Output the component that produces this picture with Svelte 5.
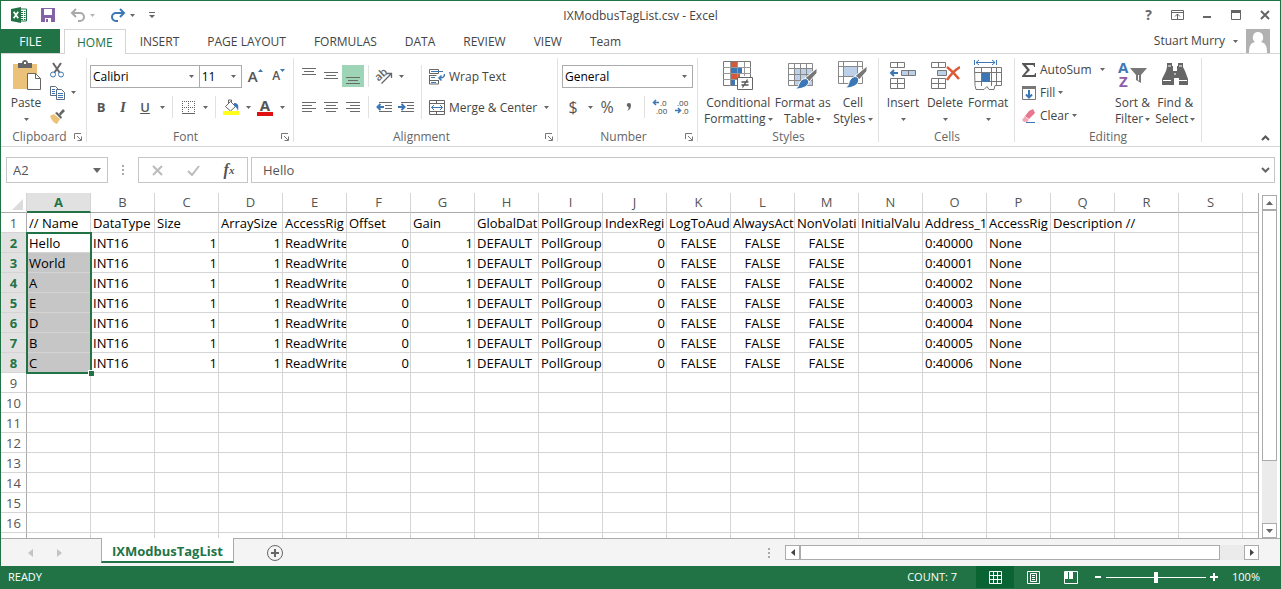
<script>
  const tabs = ['HOME', 'INSERT', 'PAGE LAYOUT', 'FORMULAS', 'DATA', 'REVIEW', 'VIEW', 'Team'];
  const columns = 'ABCDEFGHIJKLMNOPQRST'.split('');
  const rowNumbers = Array.from({ length: 17 }, (_, i) => i + 1);

  const headings = [
    '// Name', 'DataType', 'Size', 'ArraySize', 'AccessRig', 'Offset', 'Gain', 'GlobalDat',
    'PollGroup', 'IndexRegi', 'LogToAud', 'AlwaysAct', 'NonVolati', 'InitialValu',
    'Address_1', 'AccessRig', 'Description //'
  ];
  const names = ['Hello', 'World', 'A', 'E', 'D', 'B', 'C'];
  const tags = names.map((name, i) => [
    name, 'INT16', 1, 1, 'ReadWrite', 0, 1, 'DEFAULT', 'PollGroup', 0,
    'FALSE', 'FALSE', 'FALSE', '', '0:' + (40000 + i), 'None'
  ]);

  let activeTab = $state('HOME');
  let nameBox = $state('A2');
  let formula = $state('Hello');
  let zoom = $state(100);

  function cells(row) {
    // the last heading spills over its empty neighbour
    if (row === 1) return [...headings, '', ''];
    const tag = tags[row - 2] ?? [];
    return columns.map((_, i) => tag[i] ?? '');
  }

  function kind(value) {
    if (typeof value === 'number') return 'num';
    return value === 'FALSE' ? 'bool' : '';
  }

  const selected = (row) => row >= 2 && row <= 8;
</script>

{#snippet caret()}
  <svg class="caret" width="5" height="3" viewBox="0 0 5 3"><path d="M0 0h5L2.500 3z" fill="currentColor" /></svg>
{/snippet}

{#snippet lines(list)}
  <svg width="16" height="16" viewBox="0 0 16 16" stroke="#6a6a6a" shape-rendering="crispEdges">
    {#each list as [x, y, w]}<path d="M{x} {y + 0.5}h{w}" />{/each}
  </svg>
{/snippet}

{#snippet footer(label, launcher = true)}
  <div class="footer">
    <span>{label}</span>
    {#if launcher}
      <button class="launcher" aria-label="{label} settings">
        <svg width="8" height="8" viewBox="0 0 8 8" fill="none" stroke="#777"><path d="M.5 6V.5H7M3 3l4 4M7.500 3.500v4h-4" /></svg>
      </button>
    {/if}
  </div>
{/snippet}

<div class="window">
  <header class="titlebar">
    <div class="quick">
      <svg width="16" height="16" viewBox="0 0 16 16">
        <path d="M9 2h6.500v12H9z" fill="#fff" stroke="#217346" />
        <path d="M10 4.500h2M13 4.500h1.500M10 6.500h2M13 6.500h1.500M10 8.500h2M13 8.500h1.500M10 10.500h2M13 10.500h1.500M10 12.500h2M13 12.500h1.500" stroke="#217346" />
        <path d="M0 2l10-2v16L0 14z" fill="#217346" />
        <path d="M2.700 4.700l4.500 6.600M7.200 4.700l-4.500 6.600" stroke="#fff" stroke-width="1.700" />
      </svg>
      <button class="save" aria-label="Save">
        <svg width="14" height="14" viewBox="0 0 14 14"><path d="M0 0h14v14H0z" fill="#8561a5" /><path d="M3 1h8v6H3zM4 10h6v4H4z" fill="#fff" /><path d="M5 11h2v3H5z" fill="#8561a5" /></svg>
      </button>
      <button class="undo" aria-label="Undo">
        <svg width="16" height="14" viewBox="0 0 16 14" fill="none" stroke="#a9a9a9" stroke-width="2"><path d="M6 1L2 5l4 4M2.500 5H10a4 4 0 0 1 0 8H8" /></svg>
        {@render caret()}
      </button>
      <button class="redo" aria-label="Redo">
        <svg width="16" height="14" viewBox="0 0 16 14" fill="none" stroke="#3b76b5" stroke-width="2"><path d="M10 1l4 4-4 4M13.500 5H6a4 4 0 0 0 0 8h2" /></svg>
        {@render caret()}
      </button>
      <button class="customise" aria-label="Customize Quick Access Toolbar">
        <svg width="6" height="7" viewBox="0 0 6 7"><path d="M0 0h6v1H0zM0 3h6L3 6z" fill="#666" /></svg>
      </button>
    </div>
    <h1>IXModbusTagList.csv - Excel</h1>
    <div class="controls">
      <button aria-label="Help"><b>?</b></button>
      <button aria-label="Ribbon Display Options">
        <svg width="13" height="10" viewBox="0 0 13 10" fill="none" stroke="#666"><path d="M.5.500h12v9H.5zM.5 2.500h12M6.500 9V4M4 6.500L6.500 4 9 6.500" /></svg>
      </button>
      <button aria-label="Minimize"><svg width="10" height="10" viewBox="0 0 10 10"><path d="M1 6h8v2H1z" fill="#666" /></svg></button>
      <button aria-label="Restore"><svg width="10" height="10" viewBox="0 0 10 10"><path d="M.5 2h9v7.500h-9z" fill="none" stroke="#666" /><path d="M0 0h10v3H0z" fill="#666" /></svg></button>
      <button aria-label="Close"><svg width="10" height="10" viewBox="0 0 10 10"><path d="M1 1l8 8M9 1L1 9" stroke="#666" stroke-width="2" /></svg></button>
    </div>
  </header>

  <nav class="tabs">
    <button class="file">FILE</button>
    {#each tabs as tab}
      <button class="tab" class:active={tab === activeTab} onclick={() => (activeTab = tab)}>{tab}</button>
    {/each}
    <button class="account">
      Stuart Murry {@render caret()}
      <svg width="24" height="24" viewBox="0 0 24 24"><path d="M0 0h24v24H0z" fill="#b1b1b1" /><path d="M12 3a5 5.500 0 0 1 3 10c4 1 6 3 6 11H3c0-8 2-10 6-11a5 5.500 0 0 1 3-10z" fill="#fff" /></svg>
    </button>
  </nav>

  <section class="ribbon">
    <div class="group clipboard">
      <div class="body">
        <button class="big">
          <svg width="30" height="32" viewBox="0 0 30 32">
            <path d="M2 6h24v25H2z" fill="#ecc27a" />
            <path d="M7 5h4c0-4 6-4 6 0h4v5H7z" fill="#666" /><path d="M13 4h2v2h-2z" fill="#fff" />
            <path d="M16.500 15.500h8l5 5v11h-13z" fill="#fff" stroke="#666" /><path d="M24.500 15.500v5h5" fill="none" stroke="#666" />
          </svg>
          <span>Paste</span><span class="drop">{@render caret()}</span>
        </button>
        <div class="stack">
          <button class="small" aria-label="Cut">
            <svg width="16" height="16" viewBox="0 0 16 16" fill="none"><path d="M4 1l6.500 9.500M12 1L5.500 10.500" stroke="#666" stroke-width="2" /><circle cx="4" cy="12.500" r="2.500" stroke="#3b76b5" /><circle cx="12" cy="12.500" r="2.500" stroke="#3b76b5" /></svg>
          </button>
          <button class="small" aria-label="Copy">
            <svg width="16" height="16" viewBox="0 0 16 16" fill="#fff" stroke="#5d6b7b"><path d="M1.500 1.500h5l3 3v6h-8z" /><path d="M3 4.500h3M3 6.500h3M3 8.500h3" stroke="#3b76b5" /><path d="M7.500 4.500h5l3 3v7h-8z" /><path d="M9 8.500h5M9 10.500h5M9 12.500h5" stroke="#3b76b5" /></svg>
            <i>{@render caret()}</i>
          </button>
          <button class="small" aria-label="Format Painter">
            <svg width="16" height="16" viewBox="0 0 16 16"><path d="M1 8l4-2 6 5-3 5c-3-1-6-4-7-8z" fill="#ecc27a" /><path d="M6 5l2-1 5 5-1 2zM10 5.500L14 1l2 2-4.500 4.500z" fill="#666" /></svg>
          </button>
        </div>
      </div>
      {@render footer('Clipboard')}
    </div>

    <div class="group font">
      <div class="body rows">
        <div class="row">
          <label class="combo family"><select aria-label="Font"><option>Calibri</option></select>{@render caret()}</label>
          <label class="combo size"><select aria-label="Font Size"><option>11</option></select>{@render caret()}</label>
          <button class="icon resize" aria-label="Increase Font Size">
            <span class="grow">A</span><svg class="raise" width="5" height="3" viewBox="0 0 5 3"><path d="M0 3h5L2.500 0z" fill="#3b76b5" /></svg>
          </button>
          <button class="icon resize" aria-label="Decrease Font Size">
            <span class="shrink">A</span><svg class="raise" width="5" height="3" viewBox="0 0 5 3"><path d="M0 0h5L2.500 3z" fill="#3b76b5" /></svg>
          </button>
        </div>
        <div class="row">
          <button class="icon"><b>B</b></button>
          <button class="icon"><em>I</em></button>
          <button class="icon"><u>U</u></button>
          <button class="arrow" aria-label="Underline styles">{@render caret()}</button>
          <span class="sep"></span>
          <button class="icon" aria-label="Borders">
            <svg width="13" height="13" viewBox="0 0 13 13" stroke="#666" stroke-dasharray="1 1"><path d="M0 .5h13M0 6.500h13M.5 0v13M6.500 0v13M12.500 0v13" /><path d="M0 12.500h13" stroke-dasharray="none" /></svg>
          </button>
          <button class="arrow" aria-label="Border styles">{@render caret()}</button>
          <span class="sep"></span>
          <button class="icon" aria-label="Fill Color">
            <svg width="16" height="16" viewBox="0 0 16 16"><path d="M2.500 7.500l5-5 5 5-5 4.500z" fill="#fff" stroke="#666" /><path d="M5.500 5V1h3v3" fill="none" stroke="#666" /><path d="M11 4c4 0 5 2 4 8-1-3-2-4-4-5z" fill="#3b76b5" /><path d="M0 12h16v4H0z" fill="#ffff1a" /></svg>
          </button>
          <button class="arrow" aria-label="Fill colors">{@render caret()}</button>
          <button class="icon fontcolor" aria-label="Font Color"><b>A</b></button>
          <button class="arrow" aria-label="Font colors">{@render caret()}</button>
        </div>
      </div>
      {@render footer('Font')}
    </div>

    <div class="group alignment">
      <div class="body">
        <div class="rows">
          <div class="row">
            <button class="icon" aria-label="Top Align">{@render lines([[1, 0, 14], [3, 3, 10], [1, 6, 14]])}</button>
            <button class="icon" aria-label="Middle Align">{@render lines([[1, 4, 14], [3, 7, 10], [1, 10, 14]])}</button>
            <button class="icon pressed" aria-label="Bottom Align">{@render lines([[1, 9, 14], [3, 12, 10], [1, 15, 14]])}</button>
            <span class="sep"></span>
            <button class="icon" aria-label="Orientation">
              <svg width="18" height="17" viewBox="0 0 18 17"><text x="1" y="11" font-size="11" font-weight="600" fill="#666" transform="rotate(-42 6 9)">ab</text><path d="M6.500 15.500L16 6M12 5.500h4.500V10" fill="none" stroke="#666" stroke-width="1.300" /></svg>
            </button>
            <button class="arrow" aria-label="Orientation options">{@render caret()}</button>
          </div>
          <div class="row">
            <button class="icon" aria-label="Align Left">{@render lines([[1, 3, 14], [1, 6, 10], [1, 9, 14], [1, 12, 10]])}</button>
            <button class="icon" aria-label="Center">{@render lines([[1, 3, 14], [3, 6, 10], [1, 9, 14], [3, 12, 10]])}</button>
            <button class="icon" aria-label="Align Right">{@render lines([[1, 3, 14], [5, 6, 10], [1, 9, 14], [5, 12, 10]])}</button>
            <span class="sep"></span>
            <button class="icon" aria-label="Decrease Indent">
              <svg width="16" height="16" viewBox="0 0 16 16" fill="none"><path d="M3 3.500h13M9 6.500h7M9 9.500h7M3 12.500h13" stroke="#6a6a6a" /><path d="M4.500 5L1.500 8l3 3M2 8h6" stroke="#3b76b5" stroke-width="2" /></svg>
            </button>
            <button class="icon" aria-label="Increase Indent">
              <svg width="16" height="16" viewBox="0 0 16 16" fill="none"><path d="M3 3.500h13M9 6.500h7M9 9.500h7M3 12.500h13" stroke="#6a6a6a" /><path d="M3.500 5l3 3-3 3M0 8h6" stroke="#3b76b5" stroke-width="2" /></svg>
            </button>
          </div>
        </div>
        <span class="sep tall"></span>
        <div class="rows">
          <button class="wide">
            <svg width="16" height="16" viewBox="0 0 16 16" fill="none" stroke="#666"><path d="M.5.500h9v4h-9zM.5 6.500h7M.5 6v9h9v-4M.5 11.500h9" /><path d="M2 2.500h12M2 8.500h4M2 13.500h5" stroke="#3b76b5" /><path d="M15.500 5c0 3-1 4-5 4M12.500 6.500L10 9l2.500 2.500" stroke="#3b76b5" stroke-width="1.500" /></svg>
            Wrap Text
          </button>
          <button class="wide">
            <svg width="16" height="15" viewBox="0 0 16 15" fill="none" stroke="#666"><path d="M.5.500h15v14H.5zM0 3.500h16M0 11.500h16M7.500 0v3M7.500 12v3" /><path d="M2.500 7.500h11M5 5L2.500 7.500 5 10M11 5l2.500 2.500L11 10" stroke="#3b76b5" /></svg>
            Merge &amp; Center <i>{@render caret()}</i>
          </button>
        </div>
      </div>
      {@render footer('Alignment')}
    </div>

    <div class="group number">
      <div class="body rows">
        <div class="row">
          <label class="combo format"><select aria-label="Number Format"><option>General</option></select>{@render caret()}</label>
        </div>
        <div class="row">
          <button class="icon sign">$</button>
          <button class="arrow" aria-label="Accounting formats">{@render caret()}</button>
          <button class="icon sign">%</button>
          <button class="icon" aria-label="Comma Style"><svg width="6" height="10" viewBox="0 0 6 10"><path d="M3 1a2 2 0 0 1 2 2c0 3-1 5-4 6 1-1 2-2 1.500-4A2 2 0 1 1 3 1z" fill="#666" /></svg></button>
          <span class="sep"></span>
          <button class="icon decimal" aria-label="Increase Decimal">
            <svg width="16" height="16" viewBox="0 0 16 16" font-size="8" fill="#444"><text x="8" y="7">.0</text><text x="4" y="15">.00</text><path d="M4 1L1.500 3.500 4 6M2 3.500h5" fill="none" stroke="#3b76b5" stroke-width="1.500" /></svg>
          </button>
          <button class="icon decimal" aria-label="Decrease Decimal">
            <svg width="16" height="16" viewBox="0 0 16 16" font-size="8" fill="#444"><text x="3" y="7">.00</text><text x="8" y="15">.0</text><path d="M4 9l2.500 2.500L4 14M1 11.500h5" fill="none" stroke="#3b76b5" stroke-width="1.500" /></svg>
          </button>
        </div>
      </div>
      {@render footer('Number')}
    </div>

    <div class="group styles">
      <div class="body">
        <button class="big conditional">
          <svg width="30" height="32" viewBox="0 0 30 32">
            <path d="M.5 3.500h27v24H.5z" fill="#fff" stroke="#777" />
            <path d="M8 4h6v5H8zM8 16h9v5H8z" fill="#d2593a" /><path d="M8 10h11v5H8zM8 22h4v5H8z" fill="#3b76b5" />
            <path d="M0 9.500h28M0 15.500h28M0 21.500h28M7.500 4v24M14.500 4v24M21.500 4v14" fill="none" stroke="#999" />
            <path d="M8 10h11v5H8zM8 16h9v5H8z" fill="none" />
            <path d="M14.500 19.500h15v12h-15z" fill="#fff" stroke="#666" /><path d="M18.500 24h7M18.500 27h7M24.500 21.500l-5 8" stroke="#555" stroke-width="1.300" />
          </svg>
          <span>Conditional</span><span>Formatting {@render caret()}</span>
        </button>
        <button class="big">
          <svg width="30" height="32" viewBox="0 0 30 32">
            <path d="M.5 5.500h24v22H.5z" fill="#fff" /><path d="M7 11h18v17H7z" fill="#bdd0e9" />
            <path d="M.5 5.500h24v22H.5zM0 10.500h25M0 16.500h25M0 22.500h25M6.500 5v23M12.500 5v23M18.500 5v23" fill="none" stroke="#888" />
            <path d="M29 10v5l-8 9-4-4z" fill="#777" stroke="#fff" /><path d="M19 21c4 3 1 10-12 10 4-2 3-4 5-7 2-3 5-4 7-3z" fill="#3b76b5" stroke="#fff" />
          </svg>
          <span>Format as</span><span>Table {@render caret()}</span>
        </button>
        <button class="big">
          <svg width="30" height="32" viewBox="0 0 30 32">
            <path d="M.5 3.500h24v22H.5z" fill="#fff" /><path d="M6 9h13v9H6z" fill="#bdd0e9" />
            <path d="M.5 3.500h24v22H.5zM0 8.500h25M0 18.500h25M5.500 3v23M19.500 3v23" fill="none" stroke="#888" />
            <path d="M29 8v5l-8 9-4-4z" fill="#777" stroke="#fff" /><path d="M19 19c4 3 1 11-12 11 4-2 3-4 5-8 2-3 5-4 7-3z" fill="#3b76b5" stroke="#fff" />
          </svg>
          <span>Cell</span><span>Styles {@render caret()}</span>
        </button>
      </div>
      {@render footer('Styles', false)}
    </div>

    <div class="group cells">
      <div class="body">
        <button class="big">
          <svg width="28" height="32" viewBox="0 0 28 32" fill="#fff" stroke="#777">
            <path d="M1.500 4.500h14v5h-14zM8.500 4.500v5M1.500 20.500h14v10h-14zM8.500 20.500v10M1.500 25.500h14" />
            <path d="M12.500 12.500h14v5h-14zM19.500 12.500v5" fill="#bdd0e9" /><path d="M5 12l-3 3 3 3M2 15h7" fill="none" stroke="#3b76b5" stroke-width="2" />
          </svg>
          <span>Insert</span><span class="drop">{@render caret()}</span>
        </button>
        <button class="big">
          <svg width="30" height="32" viewBox="0 0 30 32" fill="#fff" stroke="#777">
            <path d="M1.500 4.500h14v5h-14zM8.500 4.500v5M1.500 20.500h14v10h-14zM8.500 20.500v10M1.500 25.500h14" />
            <path d="M7.500 12.500h9v5h-9z" fill="#bdd0e9" /><path d="M17 9c4 3 8 7 12 12M30 9c-5 3-9 7-13 13" fill="none" stroke="#dc5a37" stroke-width="2.500" />
          </svg>
          <span>Delete</span><span class="drop">{@render caret()}</span>
        </button>
        <button class="big">
          <svg width="28" height="32" viewBox="0 0 28 32" fill="none" stroke="#777">
            <path d="M.5 9.500h27v18H21l-1 4h-5l-2-3-3 3H2l-1-4z" fill="#fff" /><path d="M7.500 10v18M17.500 10v18M22.500 10v17M1 14.500h26M1 23.500h26" />
            <path d="M8 15h8v9H8z" fill="#3b76b5" stroke="none" /><path d="M.5 2v5M22.500 2v5M2 4.500h19M5 2L2 4.500 5 7M18 2l3 2.500L18 7" stroke="#3b76b5" />
          </svg>
          <span>Format</span><span class="drop">{@render caret()}</span>
        </button>
      </div>
      {@render footer('Cells', false)}
    </div>

    <div class="group editing">
      <div class="body">
        <div class="stack labelled">
          <button class="small">
            <svg width="16" height="16" viewBox="0 0 16 16"><path d="M1 1h13v4h-1c0-2-1-2-3-2H5l4 5-5 5h7c2 0 3 0 3-2h1v4H1v-1l5-6-5-6z" fill="#555" /></svg>
            AutoSum <i>{@render caret()}</i>
          </button>
          <button class="small">
            <svg width="16" height="16" viewBox="0 0 16 16"><path d="M1.500 1.500h13v13h-13z" fill="#fff" stroke="#777" /><path d="M1 1h14v3H1z" fill="#777" /><path d="M8 5v7M5 9.500l3 3 3-3" fill="none" stroke="#3b76b5" stroke-width="2" /></svg>
            Fill {@render caret()}
          </button>
          <button class="small">
            <svg width="16" height="16" viewBox="0 0 16 16"><path d="M8 3l4-2 2 4-6 6-4-3z" fill="#e8768e" /><path d="M4 8l4 4-2 2H3l-2-2z" fill="#f2a8b7" /><path d="M5 14.500h9" stroke="#3b76b5" /></svg>
            Clear {@render caret()}
          </button>
        </div>
        <button class="big">
          <svg width="30" height="32" viewBox="0 0 30 32" font-size="15" font-weight="700">
            <text x="0" y="15" fill="#3b76b5">A</text><text x="1" y="29" fill="#8e5bab">Z</text>
            <path d="M12 10h17l-6 7v8l-5-3v-5z" fill="#777" /><path d="M20 17h1v6l-1-1z" fill="#fff" />
          </svg>
          <span>Sort &amp;</span><span>Filter {@render caret()}</span>
        </button>
        <button class="big">
          <svg width="26" height="32" viewBox="0 0 26 32" fill="#666">
            <path d="M5 5h5v3h1v5h4V8h1V5h5v4l2 4 3 8v6h-9v-7h-5v7H0v-6l4-8 1-4z" /><path d="M6 8h3M17 8h3M1 22.500h8M17 22.500h8M12 16h2" stroke="#fff" />
          </svg>
          <span>Find &amp;</span><span>Select {@render caret()}</span>
        </button>
      </div>
      {@render footer('Editing', false)}
    </div>
    <button class="collapse" aria-label="Collapse the Ribbon">
      <svg width="9" height="6" viewBox="0 0 9 6"><path d="M1 5l3.500-3.500L8 5" fill="none" stroke="#555" stroke-width="2" /></svg>
    </button>
  </section>

  <section class="formulabar">
    <label class="namebox">
      <input aria-label="Name Box" bind:value={nameBox} />
      <svg width="8" height="5" viewBox="0 0 8 5"><path d="M0 0h8L4 5z" fill="#666" /></svg>
    </label>
    <span class="dots"></span>
    <div class="entry">
      <button aria-label="Cancel"><svg width="11" height="11" viewBox="0 0 11 11"><path d="M1 1l9 9M10 1l-9 9" stroke="#bbb" stroke-width="2" /></svg></button>
      <button aria-label="Enter"><svg width="13" height="11" viewBox="0 0 13 11"><path d="M1 6l4 4 7-9" fill="none" stroke="#bbb" stroke-width="2" /></svg></button>
      <button class="fx" aria-label="Insert Function">f<small>x</small></button>
    </div>
    <label class="formula">
      <input aria-label="Formula Bar" bind:value={formula} />
      <svg width="9" height="6" viewBox="0 0 9 6"><path d="M1 1l3.500 3.500L8 1" fill="none" stroke="#666" stroke-width="2" /></svg>
    </label>
  </section>

  <main>
    <div class="sheet">
      <table>
        <colgroup>
          <col class="gutter" />
          {#each columns as c}<col class="data" />{/each}
        </colgroup>
        <thead>
          <tr>
            <th class="corner"><svg width="11" height="11" viewBox="0 0 11 11"><path d="M11 0v11H0z" fill="#dcdcdc" /></svg></th>
            {#each columns as c}<th class:on={c === 'A'}>{c}</th>{/each}
          </tr>
        </thead>
        <tbody>
          {#each rowNumbers as row}
            <tr>
              <th class:on={selected(row)}>{row}</th>
              {#each cells(row) as value, i}
                <td
                  class={kind(value)}
                  class:picked={i === 0 && row > 2 && selected(row)}
                  colspan={row === 1 && i === 16 ? 2 : 1}
                >{value}</td>
              {/each}
            </tr>
          {/each}
        </tbody>
      </table>
      <div class="selection"></div>
    </div>
    <div class="vscroll">
      <button aria-label="Scroll up"><svg width="7" height="4" viewBox="0 0 7 4"><path d="M0 4h7L3.500 0z" fill="#666" /></svg></button>
      <div class="thumb"></div>
      <div class="trough"></div>
      <button aria-label="Scroll down"><svg width="7" height="4" viewBox="0 0 7 4"><path d="M0 0h7L3.500 4z" fill="#666" /></svg></button>
    </div>
  </main>

  <div class="sheetbar">
    <div class="paging">
      <button aria-label="Previous sheet"><svg width="5" height="8" viewBox="0 0 5 8"><path d="M5 0v8L0 4z" fill="#c3c3c3" /></svg></button>
      <button aria-label="Next sheet"><svg width="5" height="8" viewBox="0 0 5 8"><path d="M0 0v8l5-4z" fill="#c3c3c3" /></svg></button>
    </div>
    <button class="sheettab">IXModbusTagList</button>
    <button class="add" aria-label="New sheet">
      <svg width="16" height="16" viewBox="0 0 16 16" fill="none" stroke="#666"><circle cx="8" cy="8" r="7.500" /><path d="M8 4v8M4 8h8" stroke-width="2" /></svg>
    </button>
    <span class="dots"></span>
    <div class="hscroll">
      <button aria-label="Scroll left"><svg width="4" height="7" viewBox="0 0 4 7"><path d="M4 0v7L0 3.500z" fill="#444" /></svg></button>
      <div class="thumb"></div>
      <div class="trough"></div>
      <button aria-label="Scroll right"><svg width="4" height="7" viewBox="0 0 4 7"><path d="M0 0v7l4-3.500z" fill="#444" /></svg></button>
    </div>
  </div>

  <footer class="status">
    <span>READY</span>
    <span class="count">COUNT: 7</span>
    <button class="view on" aria-label="Normal"><svg width="13" height="13" viewBox="0 0 13 13" fill="none" stroke="#fff"><path d="M.5.500h12v12H.5zM4.500 0v13M8.500 0v13M0 4.500h13M0 8.500h13" /></svg></button>
    <button class="view" aria-label="Page Layout"><svg width="13" height="13" viewBox="0 0 13 13" fill="none" stroke="#fff"><path d="M.5.500h12v12H.5zM3.500 2.500h6v8h-6zM5 4.500h3M5 6.500h3M5 8.500h3" /></svg></button>
    <button class="view" aria-label="Page Break Preview"><svg width="14" height="13" viewBox="0 0 14 13" fill="none" stroke="#fff"><path d="M.5.500h13v12H.5z" /><path d="M1 1h3v7H1zM5 1h3v7H5z" fill="#fff" stroke="none" /><path d="M8.500 1v7" /></svg></button>
    <div class="zoom">
      <button aria-label="Zoom Out" onclick={() => (zoom = Math.max(10, zoom - 10))}><svg width="8" height="8" viewBox="0 0 8 8"><path d="M1 3h6v2H1z" fill="#fff" /></svg></button>
      <input type="range" aria-label="Zoom" min="10" max="190" bind:value={zoom} />
      <button aria-label="Zoom In" onclick={() => (zoom = Math.min(190, zoom + 10))}><svg width="8" height="8" viewBox="0 0 8 8"><path d="M0 3h3V0h2v3h3v2H5v3H3V5H0z" fill="#fff" /></svg></button>
    </div>
    <span class="percent">{zoom}%</span>
  </footer>
</div>

<style>
  :global(body) { margin: 0; background: #fff; }

  .window {
    display: flex;
    flex-direction: column;
    box-sizing: border-box;
    height: 100vh;
    overflow: hidden;
    border: 1px solid #217346;
    font: 12px/16px "Open Sans", "Noto Sans", sans-serif;
    color: #444;
    background: #fff;
  }

  button {
    display: flex;
    align-items: center;
    justify-content: center;
    padding: 0;
    border: 0;
    background: none;
    font: inherit;
    color: inherit;
    white-space: nowrap;
    cursor: default;
  }
  svg { flex: none; display: block; }
  .caret { color: #666; }
  i { font-style: normal; }

  /* title bar */
  .titlebar {
    display: grid;
    grid-template-columns: 1fr auto 1fr;
    align-items: center;
    height: 28px;
  }
  .quick { display: flex; align-items: center; padding-left: 10px; }
  .quick .save { margin-left: 14px; }
  .quick .undo, .quick .redo { gap: 4px; margin-left: 15px; }
  .quick .undo .caret { color: #b5b5b5; }
  .quick .customise { margin-left: 14px; }
  h1 { margin: 0; padding-top: 2px; font-size: 12px; font-weight: 400; }
  .controls { display: flex; justify-content: flex-end; padding-right: 1px; }
  .controls button { width: 29px; height: 24px; color: #666; }
  .controls b { font-size: 14px; }

  /* tabs */
  .tabs {
    display: flex;
    height: 24px;
    border-bottom: 1px solid #d4d4d4;
  }
  .file { width: 59px; margin-right: 4px; padding-top: 1px; background: #217346; color: #fff; }
  .tab { padding: 2px 14px 0; }
  .tab.active {
    padding: 1px 12px 0;
    margin-bottom: -1px;
    border: 1px solid #d4d4d4;
    border-bottom: 0;
    background: #fff;
    color: #217346;
  }
  .account { gap: 8px; margin: 0 10px 0 auto; }

  /* ribbon */
  .ribbon {
    display: flex;
    height: 88px;
    padding-top: 4px;
    border-bottom: 1px solid #d4d4d4;
  }
  .group {
    display: flex;
    flex-direction: column;
    box-sizing: border-box;
    height: 84px;
    padding: 0 4px;
    border-right: 1px solid #e1e1e1;
  }
  .clipboard { width: 86px; }
  .font { width: 207px; padding: 0 4px 0 3px; }
  .alignment { width: 264px; }
  .number { width: 140px; }
  .styles { width: 181px; padding: 0 4px 0 5px; }
  .cells { width: 136px; padding: 0 2px 0 3px; }
  .editing { width: 187px; }

  .body { display: flex; flex: 1; }
  .rows { display: flex; flex-direction: column; gap: 9px; padding-top: 7px; }
  .row { display: flex; height: 22px; }
  .body > .rows + .sep { margin-top: 7px; }

  .footer {
    display: flex;
    align-items: center;
    height: 10px;
    line-height: 10px;
    color: #666;
  }
  .footer span { flex: 1; text-align: center; }
  .launcher { width: 8px; height: 8px; }

  .icon { width: 22px; height: 22px; font-size: 13px; color: #555; }
  .icon.pressed { background: #9fd5b7; }
  .icon b, .icon em { font-weight: 700; }
  .icon u { font-weight: 600; }
  .icon em { font-family: "Liberation Serif", serif; font-size: 15px; }
  .icon .grow { font-size: 15px; font-weight: 600; }
  .icon .shrink { font-size: 12px; font-weight: 600; }
  .icon .raise { align-self: flex-start; margin-top: 4px; }
  .icon.resize { padding-left: 3px; width: 24px; }
  .icon.sign { font-size: 16px; }
  .icon.fontcolor b { width: 16px; border-bottom: 4px solid #e01010; font-size: 15px; line-height: 13px; }
  .arrow { width: 12px; height: 22px; }
  .sep { width: 1px; height: 22px; margin: 0 4px; background: #e1e1e1; }
  .sep.tall { height: 54px; }

  .combo { display: grid; box-sizing: border-box; height: 23px; border: 1px solid #ababab; align-items: center; }
  .combo > :global(*) { grid-area: 1 / 1; }
  .combo .caret { justify-self: end; margin-right: 5px; pointer-events: none; }
  .combo select {
    width: 100%;
    height: 21px;
    padding: 0 2px;
    border: 0;
    appearance: none;
    background: none;
    font: inherit;
    color: #000;
  }
  .combo.family { width: 112px; margin-right: -1px; }
  .combo.size { width: 44px; }
  .combo.format { width: 131px; }

  .wide { gap: 4px; justify-content: flex-start; height: 22px; padding: 1px 0 0 3px; }
  .wide i { margin-left: 3px; }

  .big { flex-direction: column; justify-content: flex-start; min-width: 42px; padding: 0 2px; }
  .big > svg { margin-bottom: 5px; }
  .big span { display: flex; align-items: center; gap: 2px; height: 16px; }
  .styles .body { justify-content: space-between; }

  .stack { display: flex; flex-direction: column; }
  .small { justify-content: flex-start; gap: 3px; height: 23px; }
  .clipboard .body { gap: 2px; }
  .clipboard .small i { margin-left: 3px; }
  .labelled { width: 92px; padding: 0 0 0 2px; }
  .labelled i { margin-left: 5px; }
  .collapse { align-self: flex-end; margin: 0 10px 5px auto; }

  /* formula bar */
  .formulabar { display: flex; align-items: center; height: 26px; padding: 10px 5px; color: #555; }
  .namebox, .formula, .entry {
    display: flex;
    align-items: center;
    box-sizing: border-box;
    height: 26px;
    border: 1px solid #c6c6c6;
  }
  .namebox { width: 102px; padding-right: 6px; }
  .entry { width: 110px; margin-right: 3px; }
  .entry button { flex: 1; }
  .entry .fx { font: italic 700 16px/16px "Liberation Serif", serif; }
  .fx small { font-size: 11px; }
  .formula { flex: 1; padding-right: 4px; }
  input { color: inherit; }
  .namebox input, .formula input {
    flex: 1;
    min-width: 0;
    padding: 0 6px;
    border: 0;
    background: none;
    font-size: 13px;
    font-family: inherit;
  }
  .formula input { padding: 0 11px; }
  .dots {
    width: 2px;
    height: 10px;
    margin: 0 14px;
    background: repeating-linear-gradient(#aaa 0 2px, transparent 2px 4px);
  }

  /* grid */
  main { display: flex; flex: 1; min-height: 0; }
  .sheet {
    position: relative;
    flex: 1;
    min-width: 0;
    overflow: hidden;
    border-right: 1px solid #ababab;
  }
  table { width: 1306px; table-layout: fixed; border-spacing: 0; }
  .gutter { width: 26px; }
  .data { width: 64px; }
  th, td {
    box-sizing: border-box;
    height: 20px;
    padding: 2px 2px 0;
    border: solid #d4d4d4;
    border-width: 0 1px 1px 0;
    overflow: hidden;
    white-space: nowrap;
    font-size: 13px;
    line-height: 17px;
    text-align: left;
    color: #000;
  }
  th { padding: 2px 0 0; font-weight: 400; text-align: center; color: #555; }
  thead th { padding-top: 0; border-bottom-color: #ababab; }
  tbody th { border-right-color: #ababab; }
  th.on { background: #e1e1e1; font-weight: 700; color: #217346; }
  thead th.on { border-bottom: 2px solid #217346; }
  .corner svg { margin: 3px 0 0 11px; }
  .num { padding-right: 1px; text-align: right; }
  .bool { text-align: center; }
  .picked { background: #c6c6c6; }

  .selection {
    position: absolute;
    top: 39px;
    left: 25px;
    width: 62px;
    height: 138px;
    border: 2px solid #217346;
  }
  .selection::after {
    content: "";
    position: absolute;
    right: -4px;
    bottom: -4px;
    width: 5px;
    height: 5px;
    border: solid #fff;
    border-width: 1px 0 0 1px;
    background: #217346;
  }

  .vscroll { display: flex; flex-direction: column; width: 15px; margin: 2px 3px 0; }
  .vscroll button, .hscroll button, .thumb {
    box-sizing: border-box;
    border: 1px solid #ababab;
    background: #fff;
  }
  .vscroll button { height: 15px; }
  .vscroll .thumb { flex: 4; }
  .trough { flex: 1; background: #ebebeb; }

  /* sheet tabs */
  .sheetbar {
    display: flex;
    align-items: center;
    height: 27px;
    border-top: 1px solid #ababab;
    background: #f4f4f4;
  }
  .paging { display: flex; gap: 24px; width: 73px; padding-left: 27px; }
  .sheettab {
    align-self: flex-start;
    height: 25px;
    margin-top: -1px;
    padding: 2px 10px 0;
    border: 1px solid #ababab;
    border-width: 0 1px 2px;
    border-bottom-color: #217346;
    background: #fff;
    color: #217346;
    font-size: 13px;
    font-weight: 700;
  }
  .add { margin: 0 auto 0 33px; }
  .sheetbar .dots { margin-right: 15px; }
  .hscroll { display: flex; width: 474px; height: 15px; margin-right: 21px; }
  .hscroll button { width: 15px; }
  .hscroll .thumb { flex: 1; }
  .hscroll .trough { flex: none; width: 24px; }

  /* status bar */
  .status { display: flex; align-items: center; height: 22px; padding-left: 7px; background: #217346; color: #fff; font-size: 11px; }
  .count { margin: 0 19px 0 auto; }
  .view { width: 38px; height: 22px; }
  .view.on { background: #0a6332; }
  .zoom { display: flex; align-items: center; gap: 4px; margin-left: 4px; }
  .zoom input { width: 100px; height: 12px; margin: 0; appearance: none; background: linear-gradient(#fff, #fff) center / 100% 1px no-repeat; }
  .zoom input::-webkit-slider-thumb { appearance: none; width: 4px; height: 11px; background: #fff; }
  .percent { margin: 0 20px 0 14px; }
</style>
